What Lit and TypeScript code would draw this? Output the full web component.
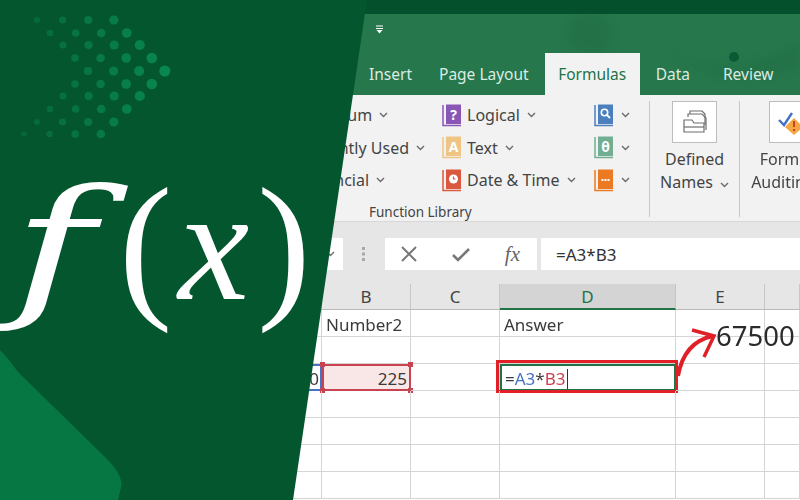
import { LitElement, html, css, svg } from 'lit';
import { customElement } from 'lit/decorators.js';

const chevron = html`<svg class="chev" width="9" height="6" viewBox="0 0 9 6">
  <path d="M1 1l3.5 3.5L8 1" fill="none" stroke="#6b6b6b" stroke-width="1.4" />
</svg>`;

/** Little book icon from the Function Library group */
const book = (color: string, glyph: unknown) => html`<svg class="book" width="20" height="23" viewBox="0 0 20 23">
  <path d="M1 1v20.5h18" fill="none" stroke="${color}" stroke-width="1.5" />
  <rect x="4" y="0.5" width="15" height="19.5" fill="${color}" />
  ${glyph}
</svg>`;

const glyph = (text: string) =>
  svg`<text x="11.5" y="15.5" text-anchor="middle" font-size="14" font-weight="700" fill="#fff" font-family="Noto Sans, sans-serif">${text}</text>`;

const clock = svg`<circle cx="11.5" cy="10" r="4.5" fill="#fff" /><path d="M11.5 7.5V10h2" fill="none" stroke="#d9583e" stroke-width="1.2" />`;
const lens = svg`<circle cx="10.5" cy="8.5" r="3.2" fill="none" stroke="#fff" stroke-width="1.6" /><path d="M13 11l3 3" stroke="#fff" stroke-width="1.8" />`;
const dots3 = svg`<path d="M7.5 11h8" stroke="#fff" stroke-width="2" stroke-dasharray="2 1" />`;

const LEFT_ROWS = ['AutoSum', 'Recently Used', 'Financial'];

const MIDDLE_ROWS = [
  { label: 'Logical', icon: book('#8a56b6', glyph('?')) },
  { label: 'Text', icon: book('#eec585', glyph('A')) },
  { label: 'Date & Time', icon: book('#d9583e', clock) },
];

const RIGHT_ICONS = [
  book('#4b7fbe', lens),
  book('#72ae93', glyph('θ')),
  book('#ec7a22', dots3),
];

const COLUMNS = ['', 'B', 'C', 'D', 'E', ''];

/** Arrow dots in the top-left corner: y and the x of the first dot in the row */
const DOT_ROWS: [number, number][] = [
  [20, 37], [33, 50], [45, 63], [58, 75], [71, 88],
  [84, 75], [96, 63], [109, 50], [122, 37], [134, 24],
];

@customElement('app-root')
export class AppRoot extends LitElement {
  static override styles = css`
    :host {
      display: block;
      position: relative;
      width: 800px;
      height: 500px;
      overflow: hidden;
      background: #fff;
      font-family: 'Noto Sans', sans-serif;
      color: #444;
    }

    .window {
      display: flex;
      flex-direction: column;
      width: 800px;
      height: 500px;
      filter: blur(0.35px);
    }

    .strip {
      height: 14px;
      flex: none;
      background: #04502c;
    }

    .chrome {
      position: relative;
      flex: none;
      height: 81px;
      background: #26774c;
      overflow: hidden;
    }

    .swirl {
      position: absolute;
      inset: 0;
    }

    .swirl .soft {
      fill: #1f6b43;
      opacity: 0.45;
      filter: blur(5px);
    }

    .qat {
      position: absolute;
      left: 375px;
      top: 11px;
    }

    .tabs {
      position: relative;
      display: flex;
      height: 81px;
      padding: 39px 0 0 369px;
      box-sizing: border-box;
      font-size: 15.5px;
      color: #dcebe3;
    }

    .tab {
      flex: none;
      height: 42px;
      line-height: 42px;
      margin-right: 27px;
      white-space: nowrap;
    }

    .tab.page {
      margin-right: 16px;
    }

    .tab.active {
      width: 95px;
      margin-right: 16px;
      text-align: center;
      background: #f2f2f2;
      color: #217346;
    }

    .tab.data {
      margin-right: 33px;
    }

    .ribbon {
      display: flex;
      flex: none;
      height: 127px;
      box-sizing: border-box;
      padding-left: 303px;
      background: #f2f2f2;
      border-bottom: 1px solid #d8d8d8;
    }

    .library {
      flex: none;
      width: 346px;
      display: flex;
      flex-direction: column;
    }

    .cols {
      display: flex;
      height: 102px;
      padding-top: 4px;
      box-sizing: border-box;
    }

    .col {
      display: flex;
      flex-direction: column;
    }

    .col.left {
      width: 139px;
    }

    .col.middle {
      width: 152px;
    }

    .row {
      display: flex;
      align-items: center;
      height: 32.5px;
      font-size: 16px;
      white-space: nowrap;
    }

    .book {
      margin-right: 5px;
      flex: none;
    }

    .chev {
      margin-left: 7px;
      flex: none;
    }

    .col.right .chev {
      margin-left: 2px;
    }

    .group-label {
      margin: 6px 0 0 66px;
      font-size: 13.5px;
      line-height: 19px;
      color: #444;
    }

    .sep {
      flex: none;
      width: 1px;
      height: 116px;
      margin-top: 6px;
      background: #c8c8c8;
    }

    .big {
      flex: none;
      display: flex;
      flex-direction: column;
      align-items: center;
      text-align: center;
      font-size: 16px;
      line-height: 23px;
      white-space: nowrap;
    }

    .big.names {
      width: 89px;
    }

    .big.audit {
      width: 102px;
    }

    .big-box {
      width: 45px;
      height: 42px;
      margin: 6px 0 5px;
      display: flex;
      align-items: center;
      justify-content: center;
      background: #fff;
      border: 1px solid #bdbdbd;
      box-sizing: border-box;
    }

    .fbar {
      display: flex;
      flex: none;
      height: 62px;
      box-sizing: border-box;
      padding: 16px 0 14px;
      background: #e6e6e6;
    }

    .namebox,
    .buttons,
    .input {
      background: #fff;
      display: flex;
      align-items: center;
    }

    .namebox {
      width: 343px;
      padding-right: 8px;
      box-sizing: border-box;
      justify-content: flex-end;
    }

    .grip {
      width: 42px;
      display: flex;
      align-items: center;
      justify-content: center;
    }

    .buttons {
      width: 152px;
      justify-content: space-between;
      padding: 0 17px 0 15px;
      box-sizing: border-box;
    }

    .fx {
      font-family: 'Liberation Serif', serif;
      font-style: italic;
      font-size: 21px;
      color: #666;
    }

    .input {
      flex: 1;
      margin-left: 4px;
      padding-left: 15px;
      font-size: 17px;
      color: #333;
    }

    .sheet {
      position: relative;
      flex: 1;
      display: grid;
      grid-template-columns: 322px 89px 89px 176px 89px 35px;
      grid-template-rows: 26px repeat(7, 27px);
      align-content: start;
    }

    .head {
      display: flex;
      align-items: center;
      justify-content: center;
      background: #e6e6e6;
      border-right: 1px solid #c6c6c6;
      border-bottom: 1px solid #b9b9b9;
      box-sizing: border-box;
      font-size: 17px;
      color: #444;
    }

    .head.on {
      background: #d4d4d4;
      border-bottom: 2px solid #217346;
      color: #217346;
    }

    .cell {
      position: relative;
      display: flex;
      align-items: center;
      padding: 2px 4px 0;
      box-sizing: border-box;
      border-right: 1px solid #d4d4d4;
      border-bottom: 1px solid #d4d4d4;
      font-size: 17px;
      color: #3a3a3a;
      white-space: nowrap;
    }

    .cell.num {
      justify-content: flex-end;
    }

    .cell.ref-a {
      border: 2px solid #4472c4;
      border-left: none;
      padding-right: 1px;
    }

    .cell.ref-b {
      background: #f9e7e8;
      border: 2px solid #c8424f;
      padding-right: 2px;
    }

    .handle {
      position: absolute;
      width: 5px;
      height: 5px;
      background: #c8424f;
    }

    .tl { left: -4px; top: -4px; }
    .tr { right: -4px; top: -4px; }
    .bl { left: -4px; bottom: -4px; }
    .br { right: -4px; bottom: -4px; }

    .cell.active {
      border: 2px solid #217346;
      padding-left: 3px;
    }

    .callout {
      position: absolute;
      left: -6px;
      right: -4px;
      top: -6px;
      bottom: -4px;
      border: 3px solid #e01f26;
    }

    .blue { color: #4472c4; }
    .red { color: #c8424f; }
    .caret {
      width: 1px;
      height: 20px;
      margin-left: 2px;
      background: #333;
    }

    .result {
      position: absolute;
      left: 716px;
      top: 33px;
      font-size: 27.5px;
      line-height: 38px;
      color: #2b2b2b;
    }

    .arrow {
      position: absolute;
      left: 670px;
      top: 40px;
    }

    .panel {
      position: absolute;
      inset: 0;
      background: #04562f;
      clip-path: polygon(0 0, 367px 0, 293px 500px, 0 500px);
    }

    .art {
      position: absolute;
      inset: 0;
    }

    .formula {
      position: absolute;
      left: 0;
      top: 145px;
      display: flex;
      align-items: baseline;
      font-family: 'Liberation Serif', serif;
      font-size: 160px;
      line-height: 200px;
      color: #fff;
      white-space: pre;
    }

    .f {
      display: inline-block;
      margin-left: 25px;
      font-family: 'DejaVu Serif', serif;
      font-style: italic;
      font-size: 154px;
      transform: scaleX(1.45);
      transform-origin: left baseline;
    }

    .open {
      margin-left: 37px;
    }

    .x {
      margin-left: 6px;
      font-style: italic;
      font-size: 160px;
    }

    .close {
      margin-left: 8px;
    }
  `;

  private renderArt() {
    const dots = DOT_ROWS.flatMap(([y, start]) =>
      [0, 1, 2, 3].map((i) => {
        const cx = start + i * 25.6;
        const t = (cx - 24) / 141;
        return svg`<circle cx="${cx}" cy="${y}" r="${2.8 + t * 2.8}" fill="#0a8a50" opacity="${0.35 + t * 0.6}" />`;
      }),
    );
    return html`<svg class="art" width="800" height="500" viewBox="0 0 800 500">
      ${dots}
      <path
        d="M0 350Q8 358 18 372L106 458Q124 476 121 488L118 500H0Z"
        fill="#067642"
      />
    </svg>`;
  }

  private renderSheet() {
    const blank = (n: number) =>
      Array.from({ length: n }, () => html`<div class="cell"></div>`);
    return html`<div class="sheet">
      ${COLUMNS.map(
        (c) => html`<div class="head ${c === 'D' ? 'on' : ''}">${c}</div>`,
      )}

      <div class="cell"></div>
      <div class="cell">Number2</div>
      <div class="cell"></div>
      <div class="cell">Answer</div>
      <div class="cell"></div>
      <div class="cell"></div>

      ${blank(6)}

      <div class="cell num ref-a">300</div>
      <div class="cell num ref-b">
        225
        <span class="handle tl"></span><span class="handle tr"></span>
        <span class="handle bl"></span><span class="handle br"></span>
      </div>
      <div class="cell"></div>
      <div class="cell active">
        =<span class="blue">A3</span>*<span class="red">B3</span><span class="caret"></span>
        <span class="callout"></span>
      </div>
      <div class="cell"></div>
      <div class="cell"></div>

      ${blank(24)}

      <svg class="arrow" width="50" height="60" viewBox="0 0 50 60">
        <path d="M8 52Q14 18 43 12" fill="none" stroke="#e01f26" stroke-width="4" />
        <path d="M22 6L44 12L34 33" fill="none" stroke="#e01f26" stroke-width="3.5" />
      </svg>
      <div class="result">67500</div>
    </div>`;
  }

  override render() {
    return html`
      <div class="window">
        <div class="strip"></div>
        <div class="chrome">
          <svg class="swirl" width="800" height="81" viewBox="0 0 800 81">
            <ellipse class="soft" cx="590" cy="20" rx="22" ry="20" />
            <path class="soft" d="M660 30Q720 75 800 30V50Q730 85 660 30Z" />
            <circle cx="734" cy="43" r="5" fill="#0b5a35" />
          </svg>
          <svg class="qat" width="9" height="9" viewBox="0 0 9 9">
            <path d="M1 1h7M1 3.5h7" stroke="#fff" stroke-width="1.2" />
            <path d="M1.5 5h6l-3 3.5z" fill="#fff" />
          </svg>
          <div class="tabs">
            <span class="tab">Insert</span>
            <span class="tab page">Page Layout</span>
            <span class="tab active">Formulas</span>
            <span class="tab data">Data</span>
            <span class="tab">Review</span>
          </div>
        </div>

        <div class="ribbon">
          <div class="library">
            <div class="cols">
              <div class="col left">
                ${LEFT_ROWS.map((r) => html`<div class="row">${r}${chevron}</div>`)}
              </div>
              <div class="col middle">
                ${MIDDLE_ROWS.map(
                  (r) => html`<div class="row">${r.icon}${r.label}${chevron}</div>`,
                )}
              </div>
              <div class="col right">
                ${RIGHT_ICONS.map((i) => html`<div class="row">${i}${chevron}</div>`)}
              </div>
            </div>
            <div class="group-label">Function Library</div>
          </div>
          <div class="sep"></div>
          <div class="big names">
            <div class="big-box">
              <svg width="28" height="26" viewBox="0 0 28 26" fill="none" stroke="#6e6e6e" stroke-width="1.2">
                <path d="M9 5V2h12l3 3v11" />
                <path d="M7 8V5h14l4 4v12" />
                <path d="M3 11h8l2 3h10v9H3z" fill="#fff" />
                <path d="M3 18h20" />
              </svg>
            </div>
            <span>Defined</span>
            <span>Names${chevron}</span>
          </div>
          <div class="sep"></div>
          <div class="big audit">
            <div class="big-box">
              <svg width="30" height="26" viewBox="0 0 30 26">
                <path d="M3 11l5 5L16 4" fill="none" stroke="#4472c4" stroke-width="2.4" />
                <path d="M18 9l9 9-9 8-9-8z" fill="#f4a640" />
                <path d="M18 12v6M18 20v2" stroke="#c8422a" stroke-width="2" />
              </svg>
            </div>
            <span>Formula</span>
            <span>Auditing${chevron}</span>
          </div>
        </div>

        <div class="fbar">
          <div class="namebox">${chevron}</div>
          <div class="grip">
            <svg width="4" height="14" viewBox="0 0 4 14" fill="#a8a8a8">
              <rect y="0" width="3" height="3" /><rect y="5.5" width="3" height="3" /><rect y="11" width="3" height="3" />
            </svg>
          </div>
          <div class="buttons">
            <svg width="18" height="18" viewBox="0 0 18 18">
              <path d="M2 2l14 14M16 2L2 16" stroke="#777" stroke-width="2" />
            </svg>
            <svg width="20" height="18" viewBox="0 0 20 18">
              <path d="M2 10l5 5L18 4" fill="none" stroke="#777" stroke-width="2.6" />
            </svg>
            <span class="fx">fx</span>
          </div>
          <div class="input">=A3*B3</div>
        </div>

        ${this.renderSheet()}
      </div>

      <div class="panel">
        ${this.renderArt()}
        <div class="formula">
          <span class="f">f</span><span class="open">(</span><span class="x">x</span><span class="close">)</span>
        </div>
      </div>
    `;
  }
}
